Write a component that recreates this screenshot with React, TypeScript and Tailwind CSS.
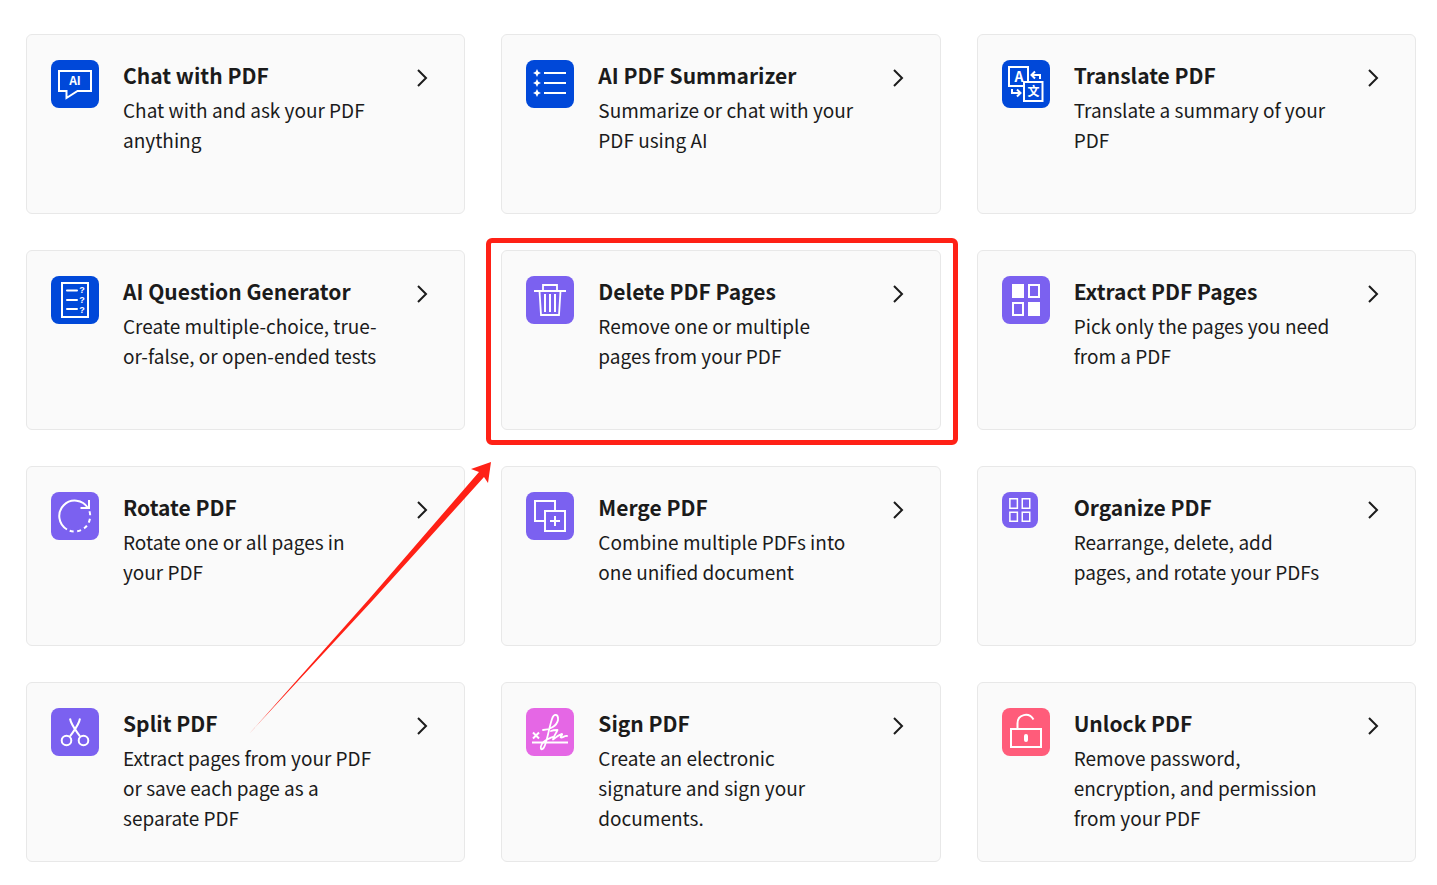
import type { ReactNode } from 'react';

type Tool = {
  title: string;
  description: string;
  color: string;
  icon: ReactNode;
  small?: boolean;
  highlighted?: boolean;
};

const BLUE = 'bg-[#0048d9]';
const PURPLE = 'bg-[#7b61f0]';
const PINK = 'bg-[#e567e5]';
const RED = 'bg-[#ff5c7a]';

const tools: Tool[] = [
  {
    title: 'Chat with PDF',
    description: 'Chat with and ask your PDF anything',
    color: BLUE,
    icon: (
      <>
        <path d="M8 11h32v20H26.5L15.5 38v-7H8z" />
        <text x="24" y="25" textAnchor="middle" fontSize="12" fontWeight="700" fill="white" stroke="none">
          AI
        </text>
      </>
    ),
  },
  {
    title: 'AI PDF Summarizer',
    description: 'Summarize or chat with your PDF using AI',
    color: BLUE,
    icon: (
      <>
        <path d="M18 13h22M18 23h22M18 33h22" />
        <path
          d="M11 9l1.3 2.7L15 13l-2.7 1.3L11 17l-1.3-2.7L7 13l2.7-1.3zM11 19l1.3 2.7L15 23l-2.7 1.3L11 27l-1.3-2.7L7 23l2.7-1.3zM11 29l1.3 2.7L15 33l-2.7 1.3L11 37l-1.3-2.7L7 33l2.7-1.3z"
          fill="white"
          stroke="none"
        />
      </>
    ),
  },
  {
    title: 'Translate PDF',
    description: 'Translate a summary of your PDF',
    color: BLUE,
    icon: (
      <>
        <path d="M21 26H7V7h19v14" />
        <path d="M22 22h18.500v19H22z" />
        <path d="M38 19v-4h-8M33 11.500L29.500 15l3.500 3.500M10 29v4h8M15 29.500l3.500 3.500-3.500 3.500" />
        <text x="17" y="22" textAnchor="middle" fontSize="14" fontWeight="700" fill="white" stroke="none">
          A
        </text>
        <text x="31.500" y="36" textAnchor="middle" fontSize="12" fontWeight="700" fill="white" stroke="none">
          文
        </text>
      </>
    ),
  },
  {
    title: 'AI Question Generator',
    description: 'Create multiple-choice, true-or-false, or open-ended tests',
    color: BLUE,
    icon: (
      <>
        <path d="M11 7h26v34H11z" />
        <path d="M16 14.500h10M16 24h10M16 33h10" strokeLinecap="round" />
        <g
          className="font-['Liberation_Sans',sans-serif]"
          fontSize="9"
          fontWeight="700"
          textAnchor="middle"
          fill="white"
          stroke="none"
        >
          <text x="31" y="17">?</text>
          <text x="31" y="27">?</text>
          <text x="31" y="37">?</text>
        </g>
      </>
    ),
  },
  {
    title: 'Delete PDF Pages',
    description: 'Remove one or multiple pages from your PDF',
    color: PURPLE,
    highlighted: true,
    icon: (
      <>
        <path d="M8 15h32M17 15V9h14v6M13.500 15l1.500 24h18l1.500-24" strokeWidth="1.800" />
        <path d="M19 18v18M24 18v18M29 18v18" />
      </>
    ),
  },
  {
    title: 'Extract PDF Pages',
    description: 'Pick only the pages you need from a PDF',
    color: PURPLE,
    icon: (
      <>
        <path d="M10 8h12v14H10zM26 26h12v14H26z" fill="white" stroke="none" />
        <path d="M27 9h10v12H27zM11 27h10v12H11z" />
      </>
    ),
  },
  {
    title: 'Rotate PDF',
    description: 'Rotate one or all pages in your PDF',
    color: PURPLE,
    icon: (
      <>
        <path d="M38 8v8h-8.500M37 16A15.500 15.500 0 1 0 16 37.500" />
        <path d="M16 37.500A15.500 15.500 0 0 0 37.500 17" strokeDasharray="4 3.500" strokeDashoffset="-3" />
      </>
    ),
  },
  {
    title: 'Merge PDF',
    description: 'Combine multiple PDFs into one unified document',
    color: PURPLE,
    icon: (
      <>
        <path d="M19 29H9V9h20v10" />
        <path d="M19 19h20v20H19zM29 24v10M24 29h10" />
      </>
    ),
  },
  {
    title: 'Organize PDF',
    description: 'Rearrange, delete, add pages, and rotate your PDFs',
    color: PURPLE,
    small: true,
    icon: <path d="M10.500 9h10v12.500h-10zM27 9h10v12.500H27zM10.500 27h10v12h-10zM27 27h10v12H27z" />,
  },
  {
    title: 'Split PDF',
    description: 'Extract pages from your PDF or save each page as a separate PDF',
    color: PURPLE,
    icon: (
      <>
        <circle cx="15.500" cy="32.500" r="4.800" />
        <circle cx="32.500" cy="32.500" r="4.800" />
        <path d="M19 28.500C22 24 28 17 29 10.500M29 28.500C26 24 20 17 19 10.500" />
      </>
    ),
  },
  {
    title: 'Sign PDF',
    description: 'Create an electronic signature and sign your documents.',
    color: PINK,
    icon: (
      <>
        <path d="M6 34.500h36M7 24.500l6 6M13 24.500l-6 6" />
        <path
          d="M17 22c6 0 14-4 15-10 .5-6-4-7-6-1-3 9-4 18-7 26-2 6-5 5-4 1C16 33 22 31 26.500 29M25 23c2-1 5-1 6.500-1-1 3-4 6-4.500 9.500 3-2 6-5 9-5.500 1 .5-2.500 3-1 3.500s3.500-2 6-1.500"
          strokeWidth="1.800"
          strokeLinecap="round"
          strokeLinejoin="round"
        />
      </>
    ),
  },
  {
    title: 'Unlock PDF',
    description: 'Remove password, encryption, and permission from your PDF',
    color: RED,
    icon: (
      <>
        <path d="M9 21h30v18H9zM15.500 21v-5.500C15.500 6 27 4 31.500 11.500" />
        <path d="M24 28v4" strokeWidth="4" strokeLinecap="round" />
      </>
    ),
  },
];

function Highlight() {
  return (
    <>
      <span className="pointer-events-none absolute -top-[13px] -right-[18px] -bottom-4 -left-4 z-10 rounded-md border-[5px] border-[#ff2116]" />
      {/* pointer from the lower left up to the highlighted card */}
      <svg
        className="pointer-events-none absolute top-[211px] -left-[253px] z-10 h-[272px] w-[243px]"
        viewBox="0 0 243 272"
        fill="#ff2116"
        aria-hidden="true"
      >
        <path d="M242 0L222 7L230 10L121 136L0 272L124 138L235 15L239 21Z" />
      </svg>
    </>
  );
}

function ToolCard({ tool }: { tool: Tool }) {
  return (
    <a
      href="#"
      className="relative flex min-h-[180px] items-start rounded-md border border-[#e8e8e8] bg-[#fafafa] pt-[25px] pr-[30px] pb-6 pl-6 text-[#1b1b1b]"
    >
      <div className="w-12 shrink-0">
        <svg
          className={`${tool.color} ${tool.small ? 'size-9' : 'size-12'} rounded-lg`}
          viewBox="0 0 48 48"
          fill="none"
          stroke="white"
          strokeWidth="2"
          aria-hidden="true"
        >
          {tool.icon}
        </svg>
      </div>
      <div className="ml-6 min-w-0 flex-1">
        <h3 className="mb-[5px] text-[21px] leading-[30px] font-bold">{tool.title}</h3>
        <p className="text-[19px] leading-[30px]">{tool.description}</p>
      </div>
      <svg
        className="mt-[6px] ml-[30px] size-6 shrink-0"
        viewBox="0 0 24 24"
        fill="none"
        stroke="currentColor"
        strokeWidth="2"
        aria-hidden="true"
      >
        <path d="M8 4l8 8-8 8" />
      </svg>
      {tool.highlighted && <Highlight />}
    </a>
  );
}

export default function App() {
  return (
    <main className="bg-white pt-[34px] pr-[21px] pb-[23px] pl-[26px] font-['Noto_Sans_CJK_SC',sans-serif]">
      <div className="grid grid-cols-3 gap-9">
        {tools.map((tool) => (
          <ToolCard key={tool.title} tool={tool} />
        ))}
      </div>
    </main>
  );
}
